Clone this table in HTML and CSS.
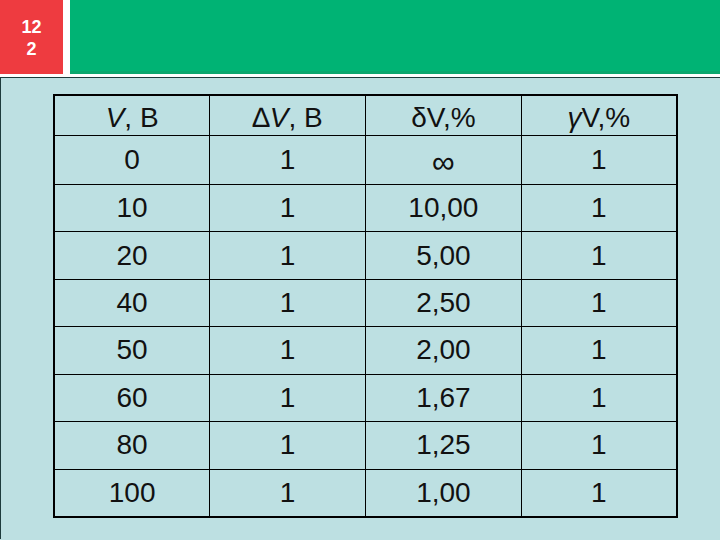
FILE: index.html
```html
<!DOCTYPE html>
<html>
<head>
<meta charset="utf-8">
<link rel="stylesheet" href="styles.css">
</head>
<body>
<div class="top">
  <div class="num">12<br>2</div>
  <div class="bar"></div>
</div>
<div class="main">
  <table class="data">
    <tr class="hdr"><td><i>V</i>, В</td><td>∆<i>V</i>, В</td><td>δV,%</td><td><i>γ</i>V,%</td></tr>
    <tr class="first"><td>0</td><td>1</td><td><span class="inf">∞</span></td><td>1</td></tr>
    <tr><td>10</td><td>1</td><td>10,00</td><td>1</td></tr>
    <tr><td>20</td><td>1</td><td>5,00</td><td>1</td></tr>
    <tr><td>40</td><td>1</td><td>2,50</td><td>1</td></tr>
    <tr><td>50</td><td>1</td><td>2,00</td><td>1</td></tr>
    <tr><td>60</td><td>1</td><td>1,67</td><td>1</td></tr>
    <tr><td>80</td><td>1</td><td>1,25</td><td>1</td></tr>
    <tr><td>100</td><td>1</td><td>1,00</td><td>1</td></tr>
  </table>
</div>
</body>
</html>
```

FILE: styles.css
```css
html, body {
  margin: 0;
  padding: 0;
  width: 720px;
  height: 540px;
  overflow: hidden;
  background: #bde0e2;
  font-family: "Liberation Sans", Arial, sans-serif;
}
.top {
  display: flex;
  height: 74px;
  gap: 7px;
  background: #fff;
  border-bottom: 3px solid #fff;
}
.num {
  width: 63px;
  background: #ee3b40;
  color: #fff;
  font-weight: bold;
  font-size: 18px;
  line-height: 22px;
  text-align: center;
  padding-top: 16px;
  box-sizing: border-box;
}
.bar {
  flex: 1;
  background: #00b374;
  border-bottom: 3px solid #0aa86e;
}
.main {
  border-top: 1px solid #1d3b3c;
  border-left: 1px solid #1d3b3c;
  height: 462px;
  padding: 16px 0 0 52px;
  box-sizing: border-box;
}
.data {
  border-collapse: collapse;
  border: 2px solid #000;
  width: 625px;
  table-layout: fixed;
  color: #111;
  font-size: 28px;
  line-height: 32px;
}
.data td {
  border: 1px solid #000;
  text-align: center;
  height: 46.43px;
  padding: 0;
}
.data tr.hdr td {
  height: 35px;
  padding-top: 4px;
}
.data tr.first td {
  height: 48px;
}
.inf {
  font-size: 32px;
  position: relative;
  top: 3px;
}
```
